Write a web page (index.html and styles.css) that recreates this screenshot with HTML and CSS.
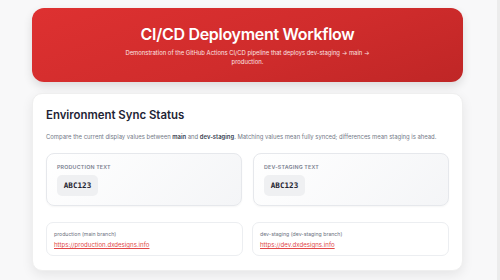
FILE: index.html
```html
<!DOCTYPE html>
<html lang="en">
<head>
<meta charset="utf-8">
<title>CI/CD Deployment Workflow</title>
<link rel="stylesheet" href="styles.css">
</head>
<body>
<div class="page">
  <header class="hero">
    <h1 class="hero-title">CI/CD Deployment Workflow</h1>
    <p class="hero-sub">Demonstration of the GitHub Actions CI/CD pipeline that deploys dev-staging → main → production.</p>
  </header>
  <section class="card">
    <h2 class="card-title">Environment Sync Status</h2>
    <p class="card-desc">Compare the current display values between <strong>main</strong> and <strong>dev-staging</strong>. Matching values mean fully synced; differences mean staging is ahead.</p>
    <div class="grid">
      <div class="value-box">
        <div class="value-label">Production Text</div>
        <div class="value-badge">ABC123</div>
      </div>
      <div class="value-box">
        <div class="value-label">Dev-Staging Text</div>
        <div class="value-badge">ABC123</div>
      </div>
    </div>
    <div class="grid links">
      <div class="link-box">
        <div class="link-label">production (main branch)</div>
        <a class="link" href="#">https://production.dxdesigns.info</a>
      </div>
      <div class="link-box">
        <div class="link-label">dev-staging (dev-staging branch)</div>
        <a class="link" href="#">https://dev.dxdesigns.info</a>
      </div>
    </div>
  </section>
</div>
</body>
</html>
```

FILE: styles.css
```css
* { box-sizing: border-box; }
html, body { margin: 0; height: 100%; }
body {
  font-family: Inter, "Noto Sans", "DejaVu Sans", sans-serif;
  background: #f8f8f9;
  border-right: 3px solid #ececec;
  overflow: hidden;
}
.page {
  width: 431px;
  margin-left: 32px;
  padding-top: 8px;
  display: flex;
  flex-direction: column;
  gap: 11px;
}
.hero {
  height: 74px;
  border-radius: 12px;
  background: linear-gradient(160deg, #de3131 0%, #d02c2c 55%, #bf2626 100%);
  box-shadow: 0 4px 10px rgba(0,0,0,0.12);
  color: #fff;
  text-align: center;
  padding-top: 16px;
  display: flex;
  flex-direction: column;
  align-items: center;
}
.hero-title {
  margin: 0;
  font-size: 16px;
  line-height: 20px;
  font-weight: 600;
  letter-spacing: -0.3px;
}
.hero-sub {
  margin: 4px 0 0;
  width: 262px;
  font-size: 5.9px;
  line-height: 9px;
  color: #fbe3e3;
}
.card {
  background: #fff;
  border-radius: 10px;
  border: 1px solid #efefef;
  box-shadow: 0 4px 12px rgba(0,0,0,0.08);
  padding: 14px 13px 14px;
  display: flex;
  flex-direction: column;
}
.card-title {
  margin: 0;
  font-size: 11.4px;
  line-height: 14px;
  font-weight: 600;
  color: #1e2435;
}
.card-desc {
  margin: 10px 0 0;
  font-size: 5.9px;
  line-height: 10px;
  color: #737987;
  white-space: nowrap;
}
.card-desc strong { color: #374151; font-weight: 600; }
.grid {
  margin-top: 11px;
  display: grid;
  grid-template-columns: 1fr 1fr;
  gap: 11px;
}
.grid.links { margin-top: 16px; gap: 9px; }
.value-box {
  height: 53px;
  border: 1px solid #e6e8ec;
  border-radius: 8px;
  background: linear-gradient(135deg, #ffffff 0%, #f4f5f7 100%);
  box-shadow: 0 1px 2px rgba(0,0,0,0.04);
  padding: 9px 10px;
  display: flex;
  flex-direction: column;
  align-items: flex-start;
  gap: 4px;
}
.value-label {
  font-size: 5.3px;
  line-height: 8px;
  font-weight: 600;
  text-transform: uppercase;
  letter-spacing: 0.2px;
  color: #7b8190;
}
.value-badge {
  height: 21px;
  width: 41px;
  border-radius: 5px;
  background: #eff0f2;
  font-family: "DejaVu Sans Mono", "Liberation Mono", monospace;
  font-weight: 700;
  font-size: 7.6px;
  line-height: 21px;
  text-align: center;
  color: #1f2430;
}
.link-box {
  height: 34px;
  border: 1px solid #eceef1;
  border-radius: 7px;
  background: #fff;
  padding: 7px 7px;
  display: flex;
  flex-direction: column;
  gap: 2px;
}
.link-label {
  font-size: 5.2px;
  line-height: 8px;
  color: #6b7280;
}
.link {
  font-size: 6.1px;
  line-height: 10px;
  color: #e14848;
  text-decoration: underline;
}
```
